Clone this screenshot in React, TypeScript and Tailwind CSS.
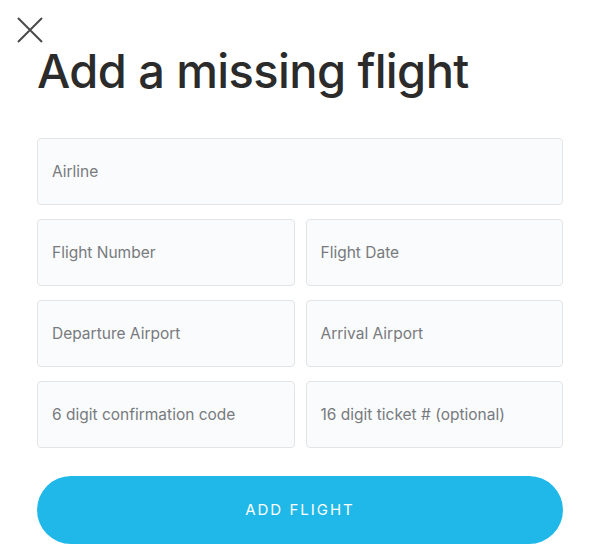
import React from "react";

const fields: Array<Array<string>> = [
    ["Airline"],
    ["Flight Number", "Flight Date"],
    ["Departure Airport", "Arrival Airport"],
    ["6 digit confirmation code", "16 digit ticket # (optional)"],
];

function Field({label}: {label: string}) {
    return (
        <div className="flex-1 h-[67px] flex items-center px-[14px] bg-[#fafbfc] border border-[#e3e4e6] rounded-[4px]">
            <span className="text-[15.5px] text-[#777a7e]">{label}</span>
        </div>
    );
}

export default function App() {
    return (
        <div className="w-[600px] h-[548px] bg-white relative overflow-hidden" style={{fontFamily: "Inter, 'Noto Sans', sans-serif"}}>
            <button className="absolute left-[16px] top-[16px] w-[28px] h-[28px]">
                <svg viewBox="0 0 28 28" width="28" height="28">
                    <path d="M2 2 L26 26 M26 2 L2 26" stroke="#4a4a4a" strokeWidth="2" fill="none" />
                </svg>
            </button>
            <div className="px-[37px] pt-[43px]">
                <h1 className="text-[47px] leading-[56px] font-medium text-[#2b2b2b] tracking-[-0.6px]">Add a missing flight</h1>
                <div className="mt-[39px] flex flex-col gap-[14px]">
                    {fields.map((row, i) => (
                        <div key={i} className="flex gap-[11px]">
                            {row.map((f) => <Field key={f} label={f} />)}
                        </div>
                    ))}
                </div>
                <button className="mt-[28px] w-full h-[68px] rounded-full bg-[#1fb8e8] text-white text-[15px] tracking-[2px]">
                    ADD FLIGHT
                </button>
            </div>
        </div>
    );
}
